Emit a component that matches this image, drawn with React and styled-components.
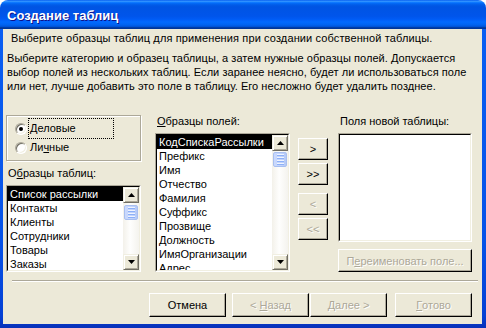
import React from 'react';
import styled, { createGlobalStyle, css } from 'styled-components';

const Global = createGlobalStyle`
  html, body { margin: 0; padding: 0; background: #ffffff; }
  body { font-family: "Liberation Sans", Arial, sans-serif; font-size: 11px; color: #000; }
  * { box-sizing: border-box; }
`;

const Window = styled.div`
  width: 486px;
  height: 328px;
  display: flex;
  flex-direction: column;
  border-radius: 8px 8px 0 0;
  overflow: hidden;
`;

const TitleBar = styled.div`
  height: 29px;
  flex: none;
  display: flex;
  align-items: center;
  padding: 1px 0 0 7px;
  background: linear-gradient(to bottom, #0058ee 0%, #3593ff 4%, #288eff 6%, #127dff 8%, #036ffc 10%, #0262ee 14%, #0057e5 20%, #0054e3 24%, #0055eb 56%, #005bf5 66%, #026afe 76%, #0062ef 86%, #0052d6 92%, #0040ab 94%, #003092 100%);
  color: #fff;
  font-weight: bold;
  font-size: 13px;
  text-shadow: 1px 1px #0f1089;
`;

const Frame = styled.div`
  flex: 1;
  display: flex;
  padding: 0 4px 4px 3px;
  background: linear-gradient(to bottom, #0a5ef2 0%, #0753e8 70%, #0540d4 96%, #0831b8 100%);
`;

const Client = styled.div`
  flex: 1;
  display: flex;
  flex-direction: column;
  background: #ece9d8;
`;

const Header = styled.div`
  padding: 2px 0 0 8px;
  line-height: 14px;
  white-space: nowrap;
  letter-spacing: 0.12px;
`;

const Description = styled.div`
  margin-top: 6px;
  padding-left: 4px;
  line-height: 14px;
  white-space: nowrap;
  letter-spacing: 0.05px;
`;

const Main = styled.div`
  display: flex;
  margin-top: 21px;
  padding-left: 3px;
  height: 158px;
`;

const Column = styled.div`
  display: flex;
  flex-direction: column;
  width: ${p => p.$w}px;
  margin-left: ${p => p.$ml || 0}px;
  padding-top: ${p => p.$pt || 0}px;
`;

const GroupBox = styled.div`
  margin-top: 1px;
  height: 46px;
  border: 1px solid #aca899;
  box-shadow: inset 1px 1px #fff, 1px 1px #fff;
  padding: 3px 0 0 8px;
  display: flex;
  flex-direction: column;
`;

const RadioRow = styled.div`
  display: flex;
  align-items: center;
  height: 19px;
`;

const RadioCircle = styled.span`
  width: 12px;
  height: 12px;
  border-radius: 50%;
  background: #fff;
  border: 1px solid;
  border-color: #aca899 #fff #fff #aca899;
  box-shadow: inset 1px 1px #716f64, inset -1px -1px #f1efe2;
  display: flex;
  align-items: center;
  justify-content: center;
  flex: none;
  &::after {
    content: '';
    width: 4px;
    height: 4px;
    border-radius: 50%;
    background: #000;
    display: ${p => (p.$checked ? 'block' : 'none')};
  }
`;

const RadioLabel = styled.span`
  margin-left: 2px;
  padding-left: 1px;
  height: 19px;
  line-height: 19px;
  width: ${p => (p.$focus ? '84px' : 'auto')};
  outline: ${p => (p.$focus ? '1px dotted #000' : 'none')};
`;

const Label = styled.div`
  line-height: 14px;
  height: 14px;
  padding-left: ${p => p.$pl || 2}px;
  margin-top: ${p => p.$mt || 0}px;
  margin-bottom: 5px;
  white-space: nowrap;
`;

const U = styled.span`
  text-decoration: underline;
`;

const SunkenOuter = styled.div`
  height: ${p => p.$h}px;
  border: 1px solid;
  border-color: #aca899 #fff #fff #aca899;
  display: flex;
`;

const SunkenInner = styled.div`
  flex: 1;
  border: 1px solid;
  border-color: #000 #f1efe2 #f1efe2 #000;
  background: #fff;
  display: flex;
  overflow: hidden;
`;

const Items = styled.div`
  flex: 1;
  display: flex;
  flex-direction: column;
  overflow: hidden;
`;

const Item = styled.div`
  height: 14px;
  line-height: 14px;
  padding-left: 2px;
  white-space: nowrap;
  flex: none;
  ${p => p.$sel && css`
    background: #000;
    color: #fff;
  `}
`;

const ScrollBar = styled.div`
  width: 16px;
  flex: none;
  display: flex;
  flex-direction: column;
  background: linear-gradient(90deg, #f3f1ea 0%, #fefefd 45%, #f4f3ee 100%);
`;

const ScrollBtn = styled.div`
  width: 16px;
  height: 16px;
  flex: none;
  background: #ece9d8;
  border: 1px solid;
  border-color: #f1efe2 #716f64 #716f64 #f1efe2;
  box-shadow: inset 1px 1px #fff, inset -1px -1px #aca899;
  display: flex;
  align-items: center;
  justify-content: center;
`;

const Thumb = styled.div`
  margin: ${p => p.$gap || 1}px 1px 0 1px;
  height: 15px;
  border-radius: 2px;
  border: 1px solid #a8bff0;
  background: linear-gradient(90deg, #cad9fd 0%, #c1d3fb 60%, #b5c9f6 100%);
  display: flex;
  flex-direction: column;
  align-items: center;
  justify-content: center;
  gap: 1px;
`;

const Grip = styled.span`
  width: 7px;
  height: 1px;
  background: #eef3ff;
  box-shadow: 0 1px #8cb0f8;
  margin-bottom: 1px;
`;

const Spacer = styled.div`
  flex: 1;
`;

const Tri = ({ down }) => (
  <svg width="7" height="4" viewBox="0 0 7 4">
    <path d={down ? 'M0 0 H7 L3.5 4 Z' : 'M0 4 H7 L3.5 0 Z'} fill="#000" />
  </svg>
);

const Scroll = ({ gap }) => (
  <ScrollBar>
    <ScrollBtn><Tri /></ScrollBtn>
    <Thumb $gap={gap}><Grip /><Grip /><Grip /><Grip /></Thumb>
    <Spacer />
    <ScrollBtn><Tri down /></ScrollBtn>
  </ScrollBar>
);

const Button = styled.div`
  width: ${p => p.$w}px;
  height: ${p => p.$h}px;
  margin-top: ${p => p.$mt || 0}px;
  margin-left: ${p => p.$ml || 0}px;
  flex: none;
  background: #ece9d8;
  border: 1px solid;
  border-color: #fff #000 #000 #fff;
  box-shadow: inset -1px -1px #aca899;
  display: flex;
  align-items: center;
  justify-content: center;
  white-space: pre;
  color: ${p => (p.$disabled ? '#aca899' : '#000')};
  text-shadow: ${p => (p.$disabled ? '1px 1px #fff' : 'none')};
`;

const Separator = styled.div`
  margin: 8px 4px 0 9px;
  height: 2px;
  border-top: 1px solid #aca899;
  border-bottom: 1px solid #fff;
`;

const Footer = styled.div`
  display: flex;
  justify-content: flex-end;
  padding-right: 10px;
  margin-top: 11px;
`;

const tables = ['Список рассылки', 'Контакты', 'Клиенты', 'Сотрудники', 'Товары', 'Заказы'];
const fields = ['КодСпискаРассылки', 'Префикс', 'Имя', 'Отчество', 'Фамилия', 'Суффикс', 'Прозвище', 'Должность', 'ИмяОрганизации', 'Адрес'];

export default function App() {
  return (
    <>
      <Global />
      <Window>
        <TitleBar>Создание таблиц</TitleBar>
        <Frame>
          <Client>
            <Header>Выберите образцы таблиц для применения при создании собственной таблицы.</Header>
            <Description>
              Выберите категорию и образец таблицы, а затем нужные образцы полей. Допускается<br />
              выбор полей из нескольких таблиц. Если заранее неясно, будет ли использоваться поле<br />
              или нет, лучше добавить это поле в таблицу. Его несложно будет удалить позднее.
            </Description>
            <Main>
              <Column $w={135}>
                <GroupBox>
                  <RadioRow>
                    <RadioCircle $checked />
                    <RadioLabel $focus><U>Д</U>еловые</RadioLabel>
                  </RadioRow>
                  <RadioRow>
                    <RadioCircle />
                    <RadioLabel>Ли<U>ч</U>ные</RadioLabel>
                  </RadioRow>
                </GroupBox>
                <Label $mt={5}>О<U>б</U>разцы таблиц:</Label>
                <SunkenOuter $h={87}>
                  <SunkenInner>
                    <Items>
                      {tables.map((t, i) => <Item key={t} $sel={i === 0}>{t}</Item>)}
                    </Items>
                    <Scroll gap={2} />
                  </SunkenInner>
                </SunkenOuter>
              </Column>
              <Column $w={135} $ml={14}>
                <Label><U>О</U>бразцы полей:</Label>
                <SunkenOuter $h={139}>
                  <SunkenInner>
                    <Items>
                      {fields.map((t, i) => <Item key={t} $sel={i === 0}>{t}</Item>)}
                    </Items>
                    <Scroll />
                  </SunkenInner>
                </SunkenOuter>
              </Column>
              <Column $w={30} $ml={8} $pt={24}>
                <Button $w={30} $h={22}>&gt;</Button>
                <Button $w={30} $h={22} $mt={3}>&gt;&gt;</Button>
                <Button $w={30} $h={22} $mt={8} $disabled>&lt;</Button>
                <Button $w={30} $h={22} $mt={3} $disabled>&lt;&lt;</Button>
              </Column>
              <Column $w={134} $ml={10}>
                <Label>Поля новой таблицы:</Label>
                <SunkenOuter $h={111}>
                  <SunkenInner />
                </SunkenOuter>
                <Button $w={134} $h={23} $mt={7} $disabled>П<U>е</U>реименовать поле...</Button>
              </Column>
            </Main>
            <Separator />
            <Footer>
              <Button $w={77} $h={24}>Отмена</Button>
              <Button $w={77} $h={24} $ml={6} $disabled>{'< '}<U>Н</U>азад</Button>
              <Button $w={77} $h={24} $ml={1} $disabled><U>Д</U>{'алее >'}</Button>
              <Button $w={77} $h={24} $ml={8} $disabled><U>Г</U>отово</Button>
            </Footer>
          </Client>
        </Frame>
      </Window>
    </>
  );
}
